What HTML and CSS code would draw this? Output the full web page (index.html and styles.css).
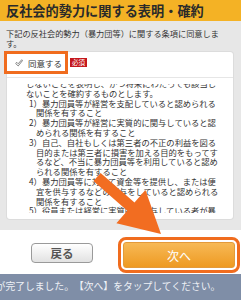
FILE: index.html
```html
<!DOCTYPE html>
<html lang="ja">
<head>
<meta charset="utf-8">
<title>反社会的勢力に関する表明・確約</title>
<link rel="stylesheet" href="styles.css">
</head>
<body>
<header class="title">反社会的勢力に関する表明・確約</header>
<section class="content">
  <p class="lead">下記の反社会的勢力（暴力団等）に関する条項に同意します。</p>
  <div class="card">
    <div class="agree-row">
      <label class="agree">
        <svg class="check" viewBox="0 0 10 10" aria-hidden="true"><path d="M0.8 5.6 L2.3 4.2 L4 5.9 L8.4 0.9 L9.4 2 L4 8.7 Z" fill="none" stroke="#555" stroke-width="0.9" stroke-linejoin="round"/></svg>
        <span>同意する</span>
      </label>
      <span class="badge">必須</span>
    </div>
    <div class="terms">
      <div class="terms-scroll">
        <div class="terms-inner">
          <p>しないことを表明し、かつ将来にわたっても該当しないことを確約するものとします。</p>
          <p class="item">1）暴力団員等が経営を支配していると認められる関係を有すること</p>
          <p class="item">2）暴力団員等が経営に実質的に関与していると認められる関係を有すること</p>
          <p class="item">3）自己、自社もしくは第三者の不正の利益を図る目的または第三者に損害を加える目的をもってするなど、不当に暴力団員等を利用していると認められる関係を有すること</p>
          <p class="item">4）暴力団員等に対して資金等を提供し、または便宜を供与するなどの関与をしていると認められる関係を有すること</p>
          <p class="item">5）役員または経営に実質的に関与している者が暴力団員等と社会的に非難されるべき関係を有すること</p>
        </div>
      </div>
    </div>
  </div>
</section>
<div class="actions">
  <button class="back" type="button">戻る</button>
  <button class="next" type="button">次へ</button>
</div>
<div class="notice">入力が完了しました。【次へ】をタップしてください。</div>
<svg class="arrow" viewBox="0 0 241 300" aria-hidden="true">
  <polygon points="100.6,172.9 134.5,202.5 145.4,190.0 161,234 116.4,223.2 127.3,210.7 93.4,181.1" fill="#f26d21"/>
</svg>
</body>
</html>
```

FILE: styles.css
```css
* { box-sizing: border-box; margin: 0; padding: 0; }
html, body { width: 241px; height: 300px; overflow: hidden; }
body {
  font-family: "Noto Sans CJK JP", "Noto Sans", sans-serif;
  color: #333;
  background: #fff;
  position: relative;
  text-spacing-trim: space-all;
}
.title {
  height: 21px;
  background: #f4b225;
  color: #2a2a2a;
  font-size: 13.2px;
  font-weight: 700;
  line-height: 21px;
  padding-left: 6px;
  white-space: nowrap;
}
.content {
  background: #e7e7e7;
  padding: 8px 0 11px;
}
.lead {
  font-size: 8.2px;
  line-height: 9.5px;
  padding: 0 13px 0 6px;
  color: #333;
}
.card {
  margin: 4px 8px 0 7px;
  background: #fff;
  border-radius: 3px;
  padding: 2px 0 6px;
  box-shadow: 0 0 0 1px #dcdcdc;
}
.agree-row {
  display: flex;
  align-items: center;
  height: 17px;
}
.agree {
  display: flex;
  align-items: center;
  height: 17px;
  width: 58px;
  padding-left: 8px;
  outline: 3px solid #f06c1e;
  position: relative;
  z-index: 1;
}
.check { width: 8px; height: 8px; margin-right: 5px; }
.agree span { font-size: 8.5px; color: #333; }
.badge {
  margin-left: 5px;
  background: #c4161c;
  color: #fff;
  font-size: 6.5px;
  line-height: 9px;
  padding: 0 2px;
}
.terms {
  margin-top: 6px;
  border-top: 1px solid #e6e6e6;
  padding: 6px 0 0 19px;
}
.terms-scroll {
  height: 129px;
  overflow: hidden;
}
.terms-inner {
  margin-top: -5px;
  width: 195px;
  font-size: 8.3px;
  line-height: 9.8px;
  color: #333;
}
.item { padding-left: 10px; text-indent: -7px; }
.actions {
  display: flex;
  align-items: flex-start;
  height: 44px;
  background: #fff;
}
.back {
  font-family: inherit;
  margin: 13px 0 0 31px;
  width: 62px;
  height: 20px;
  border: 1px solid #9a9a9a;
  border-radius: 4px;
  background: linear-gradient(#ffffff, #e2e2e2);
  font-size: 11.5px;
  color: #555;
  font-weight: 700;
}
.next {
  font-family: inherit;
  margin: 12px 0 0 30px;
  width: 112px;
  height: 26px;
  border: 1px solid #e39a3a;
  border-radius: 3px;
  background: linear-gradient(#f7b956, #ee9a22);
  color: #fff;
  font-size: 12px;
  outline: 3px solid #f06c1e;
  outline-offset: 2px;
  position: relative;
  z-index: 1;
}
.notice {
  height: 26px;
  background: #7f8ea7;
  color: #eef1f6;
  font-size: 9.8px;
  line-height: 25px;
  white-space: nowrap;
  overflow: hidden;
  text-indent: -24px;
}
.arrow {
  position: absolute;
  left: 0;
  top: 0;
  width: 241px;
  height: 300px;
  z-index: 2;
  pointer-events: none;
}
```
